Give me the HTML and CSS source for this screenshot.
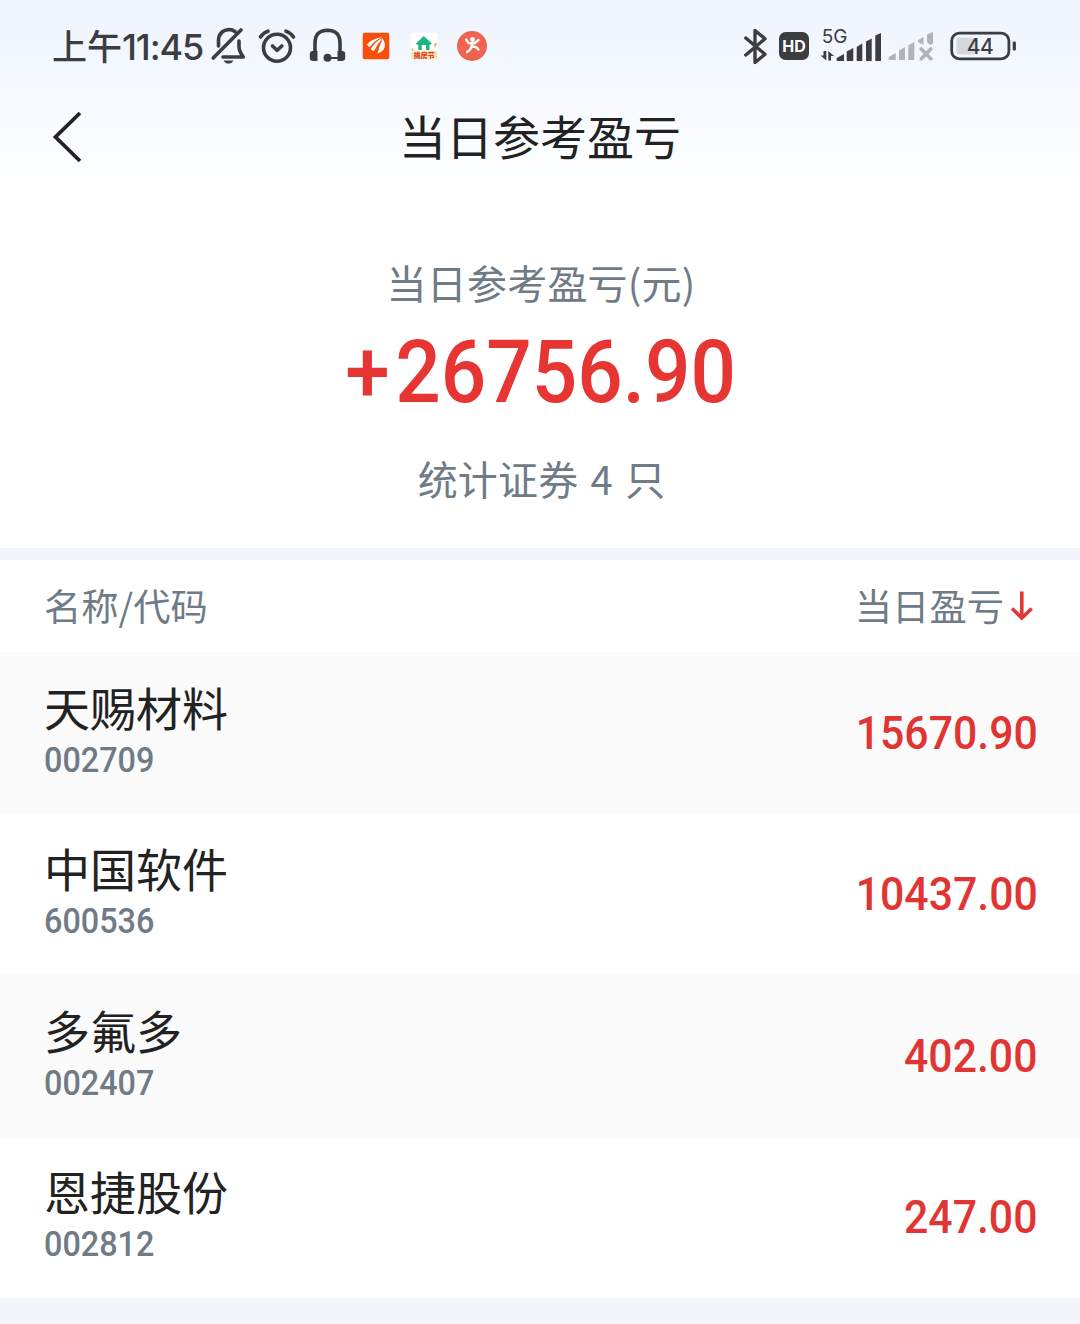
FILE: index.html
```html
<!DOCTYPE html>
<html lang="zh-CN">
<head>
    <meta charset="UTF-8">
    <title>当日参考盈亏</title>
    <link rel="stylesheet" href="styles.css">
</head>
<body>
    <div class="top">
        <div class="status-bar">
            <div class="status-left">
                <span class="time">上午<span class="clock">11:45</span></span>
                <!-- muted bell -->
                <svg class="icon-bell" width="36" height="40" viewBox="210 27 36 40" fill="none" stroke="#3b3d40" stroke-width="3.6" stroke-linecap="round" stroke-linejoin="round">
                    <path d="M218.5 47V41Q219 31.5 229 30.5Q232.500 30.500 235 32.500M239 42V48Q239 52 243.300 58H223M213.200 59L241 31"/>
                    <path d="M223.500 61.500H233.500Q232 64.600 228.500 64.600T223.500 61.500Z" fill="#3b3d40" stroke="none"/>
                </svg>
                <!-- alarm -->
                <svg class="icon-alarm" width="38" height="36" viewBox="258 28 38 36" fill="none" stroke="#3b3d40" stroke-width="3.6" stroke-linecap="round" stroke-linejoin="round">
                    <circle cx="277" cy="47.700" r="13.500"/>
                    <path d="M272.500 46L277 50.300L281.800 46M260.500 37Q263.500 32.500 268 31.200M286 31.200Q290.500 32.500 293.500 37"/>
                </svg>
                <!-- headphones -->
                <svg class="icon-phones" width="37" height="36" viewBox="308.500 28 37 36" fill="none" stroke="#3b3d40" stroke-width="3.600">
                    <path d="M314.500 54V43Q314.500 30.500 327 30.300Q339.500 30.500 339.500 43V54"/>
                    <path d="M327 58H340" stroke-width="2"/>
                    <path d="M309.300 54Q309.300 51 312 51H317V61H313Q309.300 61 309.300 58ZM344.700 54Q344.700 51 342 51H337V61H341Q344.700 61 344.700 58Z" fill="#3b3d40" stroke="none"/>
                    <circle cx="327" cy="57.800" r="4" fill="#3b3d40" stroke="none"/>
                </svg>
                <!-- notification apps -->
                <svg class="icon-app" width="28" height="28" viewBox="362 32 28 28">
                    <rect x="362.700" y="32.700" width="26.600" height="26.600" rx="2" fill="#f8500a"/>
                    <path d="M367 44.500Q371 39 382 37Q374 41 369.800 47Q368 46.500 367 44.500ZM370.800 49Q375 41.500 382.500 38Q377.500 44 374 51Q372 51 370.800 49ZM377.500 53.500Q379.500 46 382.500 38.500Q386.500 44 384 49Q382 52 377.500 53.500Z" fill="#fff"/>
                </svg>
                <svg class="icon-app" width="28" height="28" viewBox="410 32 28 28">
                    <rect x="411" y="32.700" width="26.500" height="26.600" rx="3" fill="#fff"/>
                    <path d="M411 52Q424 49 437.500 51V56.300Q437.500 59.300 434 59.300H414Q411 59.300 411 56Z" fill="#fbe3b5"/>
                    <path d="M416 43.500L423.800 36L431.800 43.500L430.500 45L429.500 44.200V50H426V45H421.700V50H418.300V44.200L417.200 45Z" fill="#1fb583"/>
                    <path d="M412 48L414 50L411.500 51ZM434 44L437 43L435 48Z" fill="#f3a044"/>
                    <text class="app-text" x="424.200" y="57.800" text-anchor="middle">挑房节</text>
                </svg>
                <svg class="icon-app-last" width="30" height="30" viewBox="457 31 30 30">
                    <circle cx="472" cy="46" r="15" fill="#ee6450"/>
                    <circle cx="472.500" cy="39.500" r="2.400" fill="#fff"/>
                    <path d="M466.200 39.500L468.500 43L474.500 43.300L478.500 40M472.500 43.500L471.500 46.500Q471 49.500 467 52M471.500 46.500Q476.500 46 478.300 49.500" fill="none" stroke="#fff" stroke-width="2.400" stroke-linecap="round" stroke-linejoin="round"/>
                </svg>
            </div>
            <div class="status-right">
                <!-- bluetooth -->
                <svg width="26" height="38" viewBox="743 27 26 38" fill="none" stroke="#3b3d40" stroke-width="3.400" stroke-linecap="round" stroke-linejoin="round">
                    <path d="M745.800 38L765 54.200L755 62.500V30.500L765 38.800L745.800 55"/>
                </svg>
                <svg class="icon-hd" width="30" height="28" viewBox="779 32.700 30 28">
                    <rect x="779" y="32.700" width="30" height="28" rx="6.500" fill="#3b3d40"/>
                    <text class="hd-text" x="794" y="52.400" text-anchor="middle">HD</text>
                </svg>
                <!-- sim 1 -->
                <svg class="icon-sim1" width="64" height="46" viewBox="819 23 64 46" fill="#3b3d40">
                    <text class="net-text" x="821.700" y="43">5G</text>
                    <path d="M836.700 61V58L844 54V61ZM846.700 61V51.500L853.300 48V61ZM856.700 61V47L862.300 43.500V61ZM866 61V41.500L871.700 38.500V61ZM875.300 61V35.500L881 33V61Z"/>
                    <path d="M823.500 51H826.300V60.500L820.500 55.500H823.500ZM828.300 60.500V51L834 56H831V60.500Z"/>
                </svg>
                <!-- sim 2, no service -->
                <svg class="icon-sim2" width="46" height="30" viewBox="888 32 46 30" fill="#b0b3b8">
                    <path d="M888.700 61V58L895.700 54V61ZM899 61V51.500L905 48V61ZM908.300 61V46.500L914.300 43V61ZM918 43V41L923.500 38V45.700ZM927 43V35.500L933 33V44.500L930 46Z"/>
                    <path d="M921.300 50L930.800 59.700M930.800 50L921.300 59.700" stroke="#b0b3b8" stroke-width="3.600" stroke-linecap="round"/>
                </svg>
                <svg class="icon-battery" width="67" height="30" viewBox="950 31.500 67 30">
                    <rect x="951.700" y="33.700" width="57.200" height="25.600" rx="7.500" fill="none" stroke="#3b3d40" stroke-width="2.800"/>
                    <rect x="956.500" y="38" width="19" height="17" rx="3" fill="#d5d9de"/>
                    <rect x="1012.700" y="42" width="3.200" height="9" rx="1" fill="#3b3d40"/>
                    <text class="bat-text" x="980" y="54" text-anchor="middle">44</text>
                </svg>
            </div>
        </div>
        <div class="nav">
            <svg class="back" width="32" height="56" viewBox="52.500 109 32 56" fill="none" stroke="#222" stroke-width="3.800">
                <path d="M80.500 113L56 137L80.500 161"/>
            </svg>
            <h1>当日参考盈亏</h1>
        </div>
    </div>

    <div class="summary">
        <p class="label">当日参考盈亏(元)</p>
        <p class="total"><span><span class="sign">+</span>26756.90</span></p>
        <p class="count">统计证券 4 只</p>
    </div>

    <div class="list">
        <div class="list-head">
            <span>名称/代码</span>
            <span class="sort">当日盈亏
                <svg width="24" height="32" viewBox="1009.500 588 24 32" fill="none" stroke="#e33a38" stroke-width="3.600">
                    <path d="M1021.300 590.500V617M1011.500 607.500L1021.300 617L1031.200 607.500"/>
                </svg>
            </span>
        </div>
        <div class="row">
            <div>
                <div class="name">天赐材料</div>
                <div class="code">002709</div>
            </div>
            <div class="value">15670.90</div>
        </div>
        <div class="row">
            <div>
                <div class="name">中国软件</div>
                <div class="code">600536</div>
            </div>
            <div class="value">10437.00</div>
        </div>
        <div class="row">
            <div>
                <div class="name">多氟多</div>
                <div class="code">002407</div>
            </div>
            <div class="value">402.00</div>
        </div>
        <div class="row">
            <div>
                <div class="name">恩捷股份</div>
                <div class="code">002812</div>
            </div>
            <div class="value">247.00</div>
        </div>
    </div>
</body>
</html>
```
FILE: styles.css
```css
* {
    box-sizing: border-box;
}

body {
    margin: 0;
    height: 1324px;
    background-color: #f4f5fa;
    font-family: "Noto Sans CJK SC", sans-serif;
    color: #222;
    overflow: hidden;
}

h1, p {
    margin: 0;
    font-weight: normal;
}

svg {
    display: block;
    flex: none;
}

.top {
    height: 190px;
    background: linear-gradient(#eef4fe, #f6f9ff 50%, #fff);
}

/* status bar */
.status-bar {
    height: 92px;
    padding: 0 63px 0 52px;
    display: flex;
    justify-content: space-between;
    align-items: center;
}

.status-left, .status-right {
    display: flex;
    align-items: center;
}

.time {
    width: 151px;
    margin-right: 7px;
    font-size: 35px;
    line-height: 50px;
    font-weight: 500;
    color: #3b3d40;
    white-space: nowrap;
}

.clock {
    font-family: "Inter", sans-serif;
    font-size: 36px;
    letter-spacing: -1.1px;
}

.icon-alarm {
    margin-left: 12px;
}

.icon-phones {
    margin-left: 12.5px;
    margin-right: 16.5px;
}

.icon-app {
    margin-right: 20px;
}

.icon-app-last {
    margin-left: -1px;
}

.app-text {
    font-size: 7px;
    font-weight: 900;
    fill: #d8432a;
}

.icon-hd {
    margin-left: 10px;
}

.hd-text {
    font: bold 16px "Inter", sans-serif;
    fill: #fff;
}

.icon-sim1 {
    margin-left: 10px;
}

.net-text {
    font: 19px "Inter", sans-serif;
}

.icon-sim2 {
    margin-left: 5px;
}

.icon-battery {
    margin-left: 16px;
}

.bat-text {
    font: 500 21px "Inter", sans-serif;
    letter-spacing: -0.5px;
    fill: #3b3d40;
}

/* title */
.nav {
    height: 90px;
    padding: 0 52px;
    display: grid;
    grid-template-columns: 32px 1fr 32px;
    align-items: center;
}

.nav h1 {
    padding-bottom: 4px;
    font-size: 47px;
    line-height: 86px;
    text-align: center;
}

/* total */
.summary {
    height: 358px;
    padding-top: 62px;
    background-color: #fff;
    text-align: center;
    color: #6f7b86;
}

.label, .count {
    font-size: 40px;
    line-height: 60px;
}

.label {
    padding-left: 2px;
    letter-spacing: 0.2px;
}

.total {
    height: 118px;
    padding-left: 2px;
    font: 500 88px/120px "Roboto", sans-serif;
    color: #e73533;
}

.total > span {
    display: inline-block;
    transform: scaleX(0.91);
}

.sign {
    margin-right: 6px;
}

.count {
    margin-top: 18px;
    padding-left: 3px;
    letter-spacing: 0.2px;
    word-spacing: 3px;
}

/* list */
.list {
    margin-top: 12px;
    background-color: #fff;
}

.list-head {
    height: 92px;
    padding: 0 46px 2px 44px;
    display: flex;
    justify-content: space-between;
    align-items: center;
    font-size: 37.3px;
    color: #6f7b86;
}

.sort {
    display: flex;
    align-items: center;
    gap: 6px;
}

.row {
    height: 161.5px;
    padding: 0 42px 0 44px;
    display: flex;
    justify-content: space-between;
    align-items: center;
}

.row:nth-child(even) {
    background-color: #fbfbfb;
}

.name {
    margin-top: -8px;
    font-size: 46px;
    line-height: 60px;
}

.code {
    padding-top: 4px;
    font: 500 35px/42px "Roboto", sans-serif;
    color: #6f7b86;
    transform: scaleX(0.925);
    transform-origin: left;
}

.value {
    font: 500 46px/60px "Roboto", sans-serif;
    color: #e03533;
    transform: scaleX(0.93);
    transform-origin: right;
}
```
